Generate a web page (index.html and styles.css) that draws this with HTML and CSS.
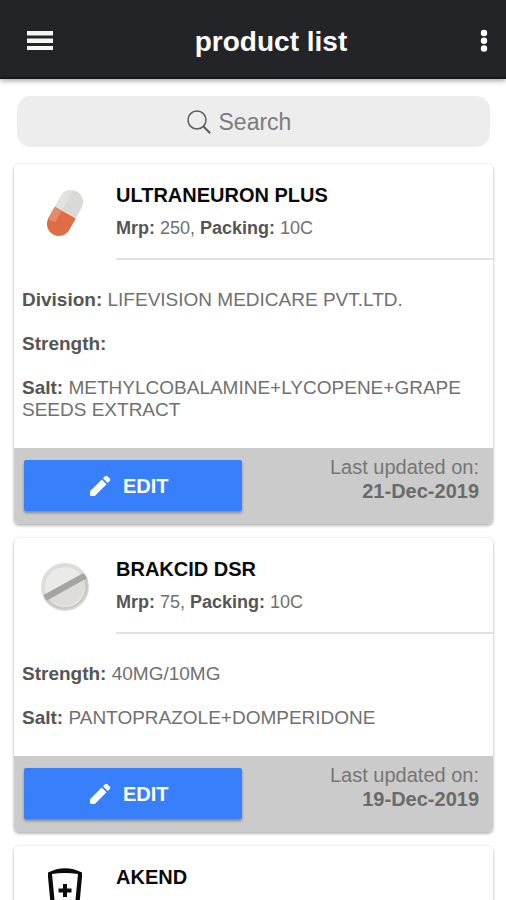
FILE: index.html
```html
<!DOCTYPE html>
<html lang="en">
<head>
<meta charset="utf-8">
<meta name="viewport" content="width=device-width, initial-scale=1">
<title>product list</title>
<link rel="stylesheet" href="styles.css">
</head>
<body>
<div class="app">
  <header class="toolbar">
    <button class="icon-button" type="button" aria-label="Menu">
      <svg width="28" height="24" viewBox="0 0 28 24"><path d="M1 1h26v4.500H1zM1 8.500h26v4.500H1zM1 16h26v4H1z" fill="#f6f6f4"/></svg>
    </button>
    <h1 class="toolbar-title">product list</h1>
    <button class="icon-button icon-button-end" type="button" aria-label="More options">
      <svg width="8" height="24" viewBox="0 0 8 24"><g fill="#fff"><circle cx="4" cy="3" r="3.200"/><circle cx="4" cy="10.700" r="3.200"/><circle cx="4" cy="18.500" r="3.200"/></g></svg>
    </button>
  </header>

  <main class="content">
    <label class="search">
      <svg width="24" height="24" viewBox="0 0 24 24" fill="none" stroke="#5c5c5c"><circle cx="10" cy="10" r="9" stroke-width="1.500"/><path d="M16.500 16.500L23.200 23.200" stroke-width="2"/></svg>
      <input class="search-input" type="text" placeholder="Search" aria-label="Search">
    </label>

    <article class="card">
      <header class="card-header">
        <div class="card-icon">
          <svg width="50" height="50" viewBox="0 0 50 50">
            <g transform="rotate(29 25 25)">
              <path d="M13 24.500V12.500a12 12 0 0 1 24 0v12z" fill="#d9dad6"/>
              <path d="M13 24.500V12.500a12 12 0 0 1 8-11.300v23.300z" fill="#e2e3e0"/>
              <path d="M13 24.500h24v13a12 12 0 0 1-24 0z" fill="#df6c43"/>
              <path d="M13 24.500h8v13q-4 2-8 0z" fill="#e58a6c"/>
            </g>
          </svg>
        </div>
        <div class="card-heading">
          <h2 class="card-title">ULTRANEURON PLUS</h2>
          <p class="card-subtitle"><b>Mrp:</b> 250, <b>Packing:</b> 10C</p>
        </div>
      </header>
      <div class="card-body">
        <p><b>Division:</b> LIFEVISION MEDICARE PVT.LTD.</p>
        <p><b>Strength:</b></p>
        <p><b>Salt:</b> METHYLCOBALAMINE+LYCOPENE+GRAPE SEEDS EXTRACT</p>
      </div>
      <footer class="card-footer">
        <button class="edit" type="button">
          <svg width="22" height="22" viewBox="0 0 22 22" fill="#fff"><path d="M1 16.200L12.700 4.500l4.800 4.800L5.800 21H2q-1 0-1-1zM13.900 3.300L16 1.200q1.200-1 2.400 0l2.400 2.400q1 1.200 0 2.400L18.700 8.100z"/></svg>
          EDIT
        </button>
        <p class="updated">Last updated on:<br><b>21-Dec-2019</b></p>
      </footer>
    </article>

    <article class="card">
      <header class="card-header">
        <div class="card-icon">
          <svg width="50" height="50" viewBox="0 0 50 50">
            <circle cx="25" cy="25" r="24" fill="#dcdcda"/>
            <path d="M4 36.500A24 24 0 0 0 46 13.500z" fill="#c9c9c7"/>
            <circle cx="25" cy="25" r="20" fill="#eaeae8"/>
            <path d="M7.500 34.600A20 20 0 0 0 42.500 15.400z" fill="#dedcd8"/>
            <path d="M3.500 33L43 11.300Q46 13 46.800 16.300L7 38.500Q4 36 3.500 33z" fill="#a4a5a3"/>
          </svg>
        </div>
        <div class="card-heading">
          <h2 class="card-title">BRAKCID DSR</h2>
          <p class="card-subtitle"><b>Mrp:</b> 75, <b>Packing:</b> 10C</p>
        </div>
      </header>
      <div class="card-body">
        <p><b>Strength:</b> 40MG/10MG</p>
        <p><b>Salt:</b> PANTOPRAZOLE+DOMPERIDONE</p>
      </div>
      <footer class="card-footer">
        <button class="edit" type="button">
          <svg width="22" height="22" viewBox="0 0 22 22" fill="#fff"><path d="M1 16.200L12.700 4.500l4.800 4.800L5.800 21H2q-1 0-1-1zM13.900 3.300L16 1.200q1.200-1 2.400 0l2.400 2.400q1 1.200 0 2.400L18.700 8.100z"/></svg>
          EDIT
        </button>
        <p class="updated">Last updated on:<br><b>19-Dec-2019</b></p>
      </footer>
    </article>

    <article class="card">
      <header class="card-header">
        <div class="card-icon">
          <svg width="50" height="50" viewBox="0 0 50 50">
            <path d="M8 1.500Q25-7 42 1.500V6L38.800 40Q38 45 34 45H16Q12 45 11.200 40L8 6z" transform="translate(0 1)" fill="#0b0b0b"/>
            <path d="M12 4Q25 2 38 4L34.700 38Q34.500 41 32 41H18Q15.500 41 15.300 38z" fill="#fff"/>
            <path d="M23 14h4v4.500h4.500v4H27V27h-4v-4.500h-4.500v-4H23z" fill="#0b0b0b"/>
          </svg>
        </div>
        <div class="card-heading">
          <h2 class="card-title">AKEND</h2>
        </div>
      </header>
    </article>
  </main>
</div>
</body>
</html>
```
FILE: styles.css
```css
* {
  box-sizing: border-box;
}

body {
  margin: 0;
  background: #fff;
  color: #707070;
  font: 19px/22px "Liberation Sans", Arial, sans-serif;
}

h1, h2, p {
  margin: 0;
}

svg {
  display: block;
  overflow: visible;
}

button {
  border: 0;
  font: inherit;
  cursor: pointer;
}

.app {
  display: flex;
  flex-direction: column;
  height: 100vh;
}

.toolbar {
  flex: none;
  display: grid;
  grid-template-columns: 80px 1fr 44px;
  align-items: center;
  padding: 22px 0 16px;
  border-bottom: 2px solid #17181b;
  background: #222428;
  box-shadow: 0 2px 5px rgba(0, 0, 0, 0.35);
  color: #fff;
  z-index: 1;
}

.icon-button {
  display: flex;
  justify-content: center;
  padding: 0;
  background: none;
}

.icon-button-end {
  justify-self: center;
}

.toolbar-title {
  font-size: 28px;
  line-height: 39px;
  text-align: center;
}

.content {
  flex: 1;
  display: flex;
  flex-direction: column;
  gap: 14px;
  min-height: 0;
  padding: 17px 13px 0 14px;
  overflow: hidden;
}

.card {
  flex: none;
  border-radius: 5px;
  background: #fff;
  box-shadow: 0 2px 3px rgba(0, 0, 0, 0.25), 0 0 3px rgba(0, 0, 0, 0.12);
  overflow: hidden;
}

.search {
  flex: none;
  display: flex;
  align-items: center;
  justify-content: center;
  gap: 8px;
  height: 51px;
  margin: 0 3px 3px;
  padding-right: 26px;
  border-radius: 14px;
  background: #ededed;
}

.search-input {
  width: 76px;
  padding: 0;
  border: 0;
  outline: 0;
  background: none;
  color: #444;
  font: inherit;
  font-size: 23px;
  line-height: 28px;
}

.search-input::placeholder {
  color: #7c7c7c;
  opacity: 1;
}

.card-header {
  display: grid;
  grid-template-columns: 102px 1fr;
}

.card-icon {
  display: flex;
  justify-content: center;
  padding-top: 24px;
}

.card-heading {
  display: flex;
  flex-direction: column;
  gap: 11px;
  min-height: 96px;
  padding-top: 20px;
  border-bottom: 2px solid #e2e2e2;
}

.card-title {
  color: #0a0a0a;
  font-size: 20px;
  line-height: 22px;
}

.card-subtitle {
  font-size: 18px;
}

.card-subtitle b,
.card-body b {
  color: #555;
}

.card-body {
  display: flex;
  flex-direction: column;
  gap: 22px;
  padding: 29px 8px 27px;
}

.card-footer {
  display: grid;
  grid-template-columns: 1fr 1fr;
  background: #cbcbcb;
}

.edit {
  display: flex;
  align-items: center;
  justify-content: center;
  gap: 12px;
  height: 51px;
  margin: 12px 12px 13px 10px;
  padding: 0 14px 0 6px;
  border-radius: 2px;
  background: #387ffb;
  box-shadow: 0 2px 3px rgba(0, 0, 0, 0.35);
  color: #fff;
  font-size: 20px;
  font-weight: bold;
}

.updated {
  padding: 7px 14px 0 0;
  color: #757575;
  font-size: 20px;
  line-height: 24px;
  text-align: right;
}

.updated b {
  color: #6a6a6a;
}
```
